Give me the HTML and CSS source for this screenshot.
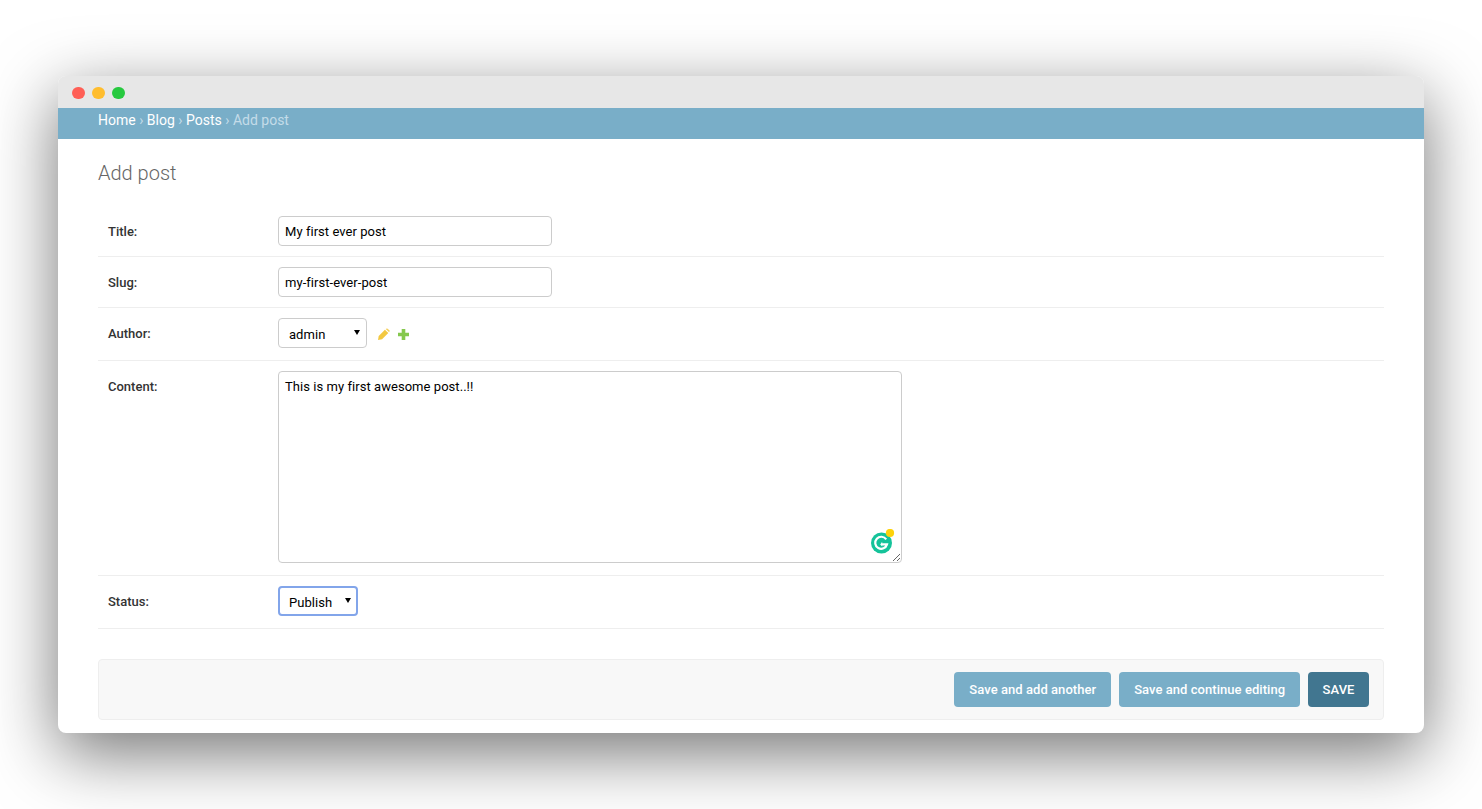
FILE: index.html
```html
<!DOCTYPE html>
<html lang="en">
<head>
<meta charset="utf-8">
<title>Add post</title>
<link rel="stylesheet" href="styles.css">
</head>
<body>
<div class="window">
  <div class="titlebar">
    <span class="dot dot-red"></span>
    <span class="dot dot-yellow"></span>
    <span class="dot dot-green"></span>
  </div>
  <div class="breadcrumbs">
    <a href="#">Home</a> › <a href="#">Blog</a> › <a href="#">Posts</a> › Add post
  </div>
  <main class="content">
    <h1 class="page-title">Add post</h1>
    <form class="post-form">
      <div class="form-row">
        <label class="field-label" for="title">Title:</label>
        <input class="text-input" id="title" type="text" value="My first ever post">
      </div>
      <div class="form-row">
        <label class="field-label" for="slug">Slug:</label>
        <input class="text-input" id="slug" type="text" value="my-first-ever-post">
      </div>
      <div class="form-row form-row-tall">
        <label class="field-label" for="author">Author:</label>
        <div class="select-wrap select-author">
          <select class="select-input" id="author"><option>admin</option></select>
        </div>
        <div class="related-icons">
          <svg class="icon" width="12" height="12" viewBox="0 0 12 12" aria-hidden="true">
            <path d="M0 12 L0.7 7.9 L6.9 1.7 L10.3 5.1 L4.1 11.3 Z" fill="#f3c840"/>
            <path d="M7.7 0.9 Q8.7 0 9.7 0.7 L11.3 2.3 Q12 3.3 11.1 4.3 Z" fill="#f5cf5c"/>
          </svg>
          <svg class="icon" width="11" height="11" viewBox="0 0 11 11" aria-hidden="true">
            <path d="M3.7 0 H7.3 V3.7 H11 V7.3 H7.3 V11 H3.7 V7.3 H0 V3.7 H3.7 Z" fill="#85c84e"/>
          </svg>
        </div>
      </div>
      <div class="form-row form-row-tall">
        <label class="field-label" for="body">Content:</label>
        <div class="textarea-wrap">
          <textarea class="text-area" id="body">This is my first awesome post..!!</textarea>
          <svg class="grammarly" width="24" height="26" viewBox="0 0 24 26" aria-hidden="true">
            <circle cx="10.5" cy="14" r="10.5" fill="#15c39a"/>
            <path d="M15.2 10.4 A6 6 0 1 0 16 15.4 H11" fill="none" stroke="#fff" stroke-width="2.2"/>
            <path d="M11.2 12.8 L9.2 15.4 L11.2 17.6 Z" fill="#fff"/>
            <circle cx="19" cy="4" r="4.1" fill="#fdd20a"/>
          </svg>
        </div>
      </div>
      <div class="form-row form-row-tall">
        <label class="field-label" for="status">Status:</label>
        <div class="select-wrap select-status">
          <select class="select-input select-focused" id="status"><option>Publish</option></select>
        </div>
      </div>
      <div class="submit-row">
        <button class="btn" type="button">Save and add another</button>
        <button class="btn" type="button">Save and continue editing</button>
        <button class="btn btn-default" type="button">SAVE</button>
      </div>
    </form>
  </main>
</div>
</body>
</html>
```

FILE: styles.css
```css
* {
  box-sizing: border-box;
}

html,
body {
  height: 100%;
}

body {
  margin: 0;
  padding: 76px 58px 0;
  background: #fff;
  font-family: Roboto, "Liberation Sans", sans-serif;
  font-size: 13px;
  color: #333;
  overflow: hidden;
}

.window {
  height: 657px;
  background: #fff;
  border-radius: 8px;
  box-shadow: 0 20px 68px rgba(0, 0, 0, 0.55);
  overflow: hidden;
}

.titlebar {
  height: 32px;
  background: #e7e7e7;
  display: flex;
  align-items: center;
  gap: 7.4px;
  padding: 2px 0 0 14px;
}

.dot {
  width: 12.6px;
  height: 12.6px;
  border-radius: 50%;
}

.dot-red { background: #ff5f56; }
.dot-yellow { background: #ffbd2e; }
.dot-green { background: #27c93f; }

.breadcrumbs {
  height: 31px;
  padding: 3px 40px 0;
  background: #79aec8;
  color: #c4dce8;
  font-size: 14px;
  line-height: 18px;
}

.breadcrumbs a {
  color: #fff;
  text-decoration: none;
}

.content {
  padding: 23px 40px 0;
}

.page-title {
  margin: 0 0 21px;
  font-size: 20px;
  font-weight: 300;
  line-height: 23px;
  color: #666;
}

.form-row {
  display: flex;
  align-items: flex-start;
  padding: 10px 0;
  border-bottom: 1px solid #eee;
}

.form-row-tall {
  padding-bottom: 12px;
}

.field-label {
  flex: 0 0 180px;
  padding: 8px 0 0 10px;
  font-weight: 500;
  line-height: 16px;
  color: #333;
}

.text-input,
.text-area,
.select-input {
  font-family: Roboto, "Liberation Sans", sans-serif;
  font-size: 13px;
  letter-spacing: 0.05px;
  color: #000;
  background: #fff;
  border: 1px solid #ccc;
  border-radius: 4px;
  outline: none;
}

.text-input {
  width: 274px;
  height: 30px;
  padding: 5px 6px;
}

.textarea-wrap {
  position: relative;
  display: flex;
}

.text-area {
  width: 624px;
  height: 192px;
  padding: 6px 6px 5px;
  line-height: 18px;
  resize: both;
}

.grammarly {
  position: absolute;
  right: 7px;
  bottom: 8px;
}

.select-wrap {
  position: relative;
  height: 30px;
}

.select-wrap::after {
  content: "";
  position: absolute;
  top: 12px;
  right: 7px;
  border-left: 3px solid transparent;
  border-right: 3px solid transparent;
  border-top: 5px solid #000;
  pointer-events: none;
}

.select-author { width: 89px; }
.select-status { width: 80px; }

.select-input {
  display: block;
  width: 100%;
  height: 30px;
  padding: 2px 0 0 10px;
  appearance: none;
  -webkit-appearance: none;
}

.select-focused {
  border: 2px solid #82a5ea;
  padding-left: 9px;
}

.related-icons {
  display: flex;
  align-items: center;
  gap: 8px;
  height: 30px;
  margin-left: 11px;
  padding-top: 2px;
}

.icon {
  display: block;
}

.submit-row {
  display: flex;
  justify-content: flex-end;
  gap: 8px;
  margin-top: 30px;
  padding: 12px 14px;
  background: #f8f8f8;
  border: 1px solid #eee;
  border-radius: 4px;
}

.btn {
  height: 35px;
  padding: 0 15px;
  border: 0;
  border-radius: 4px;
  background: #79aec8;
  color: #fff;
  font-family: Roboto, "Liberation Sans", sans-serif;
  font-size: 13px;
  font-weight: 500;
  letter-spacing: 0.05px;
}

.btn-default {
  padding: 0 14.5px;
  background: #417690;
}
```
